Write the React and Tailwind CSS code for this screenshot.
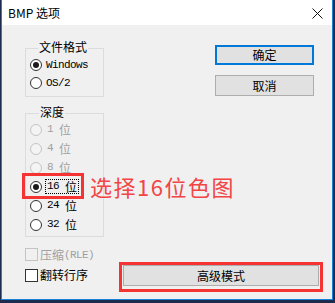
import React from "react";

const cjk = { fontFamily: '"Noto Sans CJK SC", "Noto Sans", sans-serif' };
const mono = { fontFamily: '"Liberation Mono", "DejaVu Sans Mono", monospace', letterSpacing: "-0.6px" };

function Radio({ checked, disabled }) {
  return (
    <span
      className={
        "flex h-[12px] w-[12px] shrink-0 items-center justify-center rounded-full border " +
        (disabled ? "border-[#c4c4c4] bg-[#f4f4f4]" : "border-[#333333] bg-white")
      }
    >
      {checked && <span className="h-[6px] w-[6px] rounded-full bg-[#1a1a1a]" />}
    </span>
  );
}

function DepthRow({ num, disabled, checked, focus, children }) {
  return (
    <div className="relative flex h-[19px] items-center pl-[4px]">
      <Radio checked={checked} disabled={disabled} />
      <span
        className={
          "ml-[3px] flex items-center leading-[13px] " +
          (focus ? "border border-dotted border-black px-[1px]" : "px-[2px]") +
          (disabled ? " text-[#a0a0a0]" : " text-black")
        }
      >
        <span className="text-[11px]" style={mono}>{num}&nbsp;</span>
        <span className="text-[12px]" style={cjk}>位</span>
      </span>
      {children}
    </div>
  );
}

export default function App() {
  return (
    <div className="h-[303px] w-[335px] overflow-hidden bg-[#1d2c4e]">
      <div className="ml-[1px] flex h-[300px] w-[332px] flex-col border-b border-l border-r border-[#1883d7] bg-[#f0f0f0]">
        {/* Title bar */}
        <div className="flex h-[25px] shrink-0 items-center justify-between bg-white pl-[6px] pr-[9px]">
          <span className="text-[12px] leading-[14px] text-black" style={cjk}>BMP 选项</span>
          <svg width="11" height="11" viewBox="0 0 11 11" className="mt-[1px]">
            <path d="M0.5 0.5 L10.5 10.5 M10.5 0.5 L0.5 10.5" stroke="#111" strokeWidth="1" fill="none" />
          </svg>
        </div>

        {/* Body */}
        <div className="flex flex-col pl-[23px]">
          <div className="flex items-start">
            {/* Left column */}
            <div className="flex w-[79px] flex-col">
              {/* 文件格式 */}
              <div className="relative mt-[23px] h-[49px] border border-[#dcdcdc] pt-[7px]">
                <span className="absolute left-[12px] top-[-9px] bg-[#f0f0f0] px-[1px] text-[12px] leading-[14px] text-black" style={cjk}>
                  文件格式
                </span>
                <div className="flex h-[18px] items-center pl-[4px]">
                  <Radio checked />
                  <span className="ml-[4px] text-[11px] leading-[12px] text-black" style={mono}>Windows</span>
                </div>
                <div className="flex h-[18px] items-center pl-[4px]">
                  <Radio />
                  <span className="ml-[4px] text-[11px] leading-[12px] text-black" style={mono}>OS/2</span>
                </div>
              </div>

              {/* 深度 */}
              <div className="relative mt-[16px] h-[124px] border border-[#dcdcdc] pt-[6px]">
                <span className="absolute left-[13px] top-[-9px] bg-[#f0f0f0] px-[1px] text-[12px] leading-[14px] text-black" style={cjk}>
                  深度
                </span>
                <DepthRow num="1" disabled />
                <DepthRow num="4" disabled />
                <DepthRow num="8" disabled />
                <DepthRow num="16" checked focus>
                  <span className="absolute left-[-4px] top-[-4px] h-[26px] w-[62px] border-[3px] border-[#f53333]" />
                  <span
                    className="absolute left-[64px] top-[-6px] whitespace-nowrap text-[22px] leading-[30px] tracking-[1.5px] text-[#f24545]"
                    style={cjk}
                  >
                    选择16位色图
                  </span>
                </DepthRow>
                <DepthRow num="24" />
                <DepthRow num="32" />
              </div>

              {/* 压缩(RLE) */}
              <div className="mt-[11px] flex h-[13px] items-center">
                <span className="h-[13px] w-[13px] shrink-0 border border-[#c4c4c4] bg-[#f0f0f0]" />
                <span className="ml-[2px] flex items-center text-[#a0a0a0]">
                  <span className="text-[12px] leading-[14px]" style={cjk}>压缩</span>
                  <span className="text-[11px] leading-[12px]" style={mono}>(RLE)</span>
                </span>
              </div>
            </div>

            {/* Right column */}
            <div className="ml-[111px] mt-[20px] flex flex-col">
              <button className="flex h-[20px] w-[99px] items-center justify-center border-2 border-[#0078d7] bg-[#e1e1e1] text-[12px] leading-[14px] text-black" style={cjk}>
                确定
              </button>
              <button className="mt-[10px] flex h-[21px] w-[99px] items-center justify-center border border-[#adadad] bg-[#e1e1e1] text-[12px] leading-[14px] text-black" style={cjk}>
                取消
              </button>
            </div>
          </div>

          {/* Bottom row */}
          <div className="mt-[1px] flex items-start">
            <div className="mt-[6px] flex w-[94px] items-center">
              <span className="h-[13px] w-[13px] shrink-0 border border-[#333333] bg-white" />
              <span className="ml-[2px] text-[12px] leading-[14px] text-black" style={cjk}>翻转行序</span>
            </div>
            <div className="h-[30px] w-[204px] border-[3px] border-[#f53333] px-[1px]">
              <button className="flex h-[21px] w-full items-center justify-center border border-[#adadad] bg-[#e1e1e1] text-[12px] leading-[14px] text-black" style={cjk}>
                高级模式
              </button>
            </div>
          </div>
        </div>
      </div>
    </div>
  );
}
